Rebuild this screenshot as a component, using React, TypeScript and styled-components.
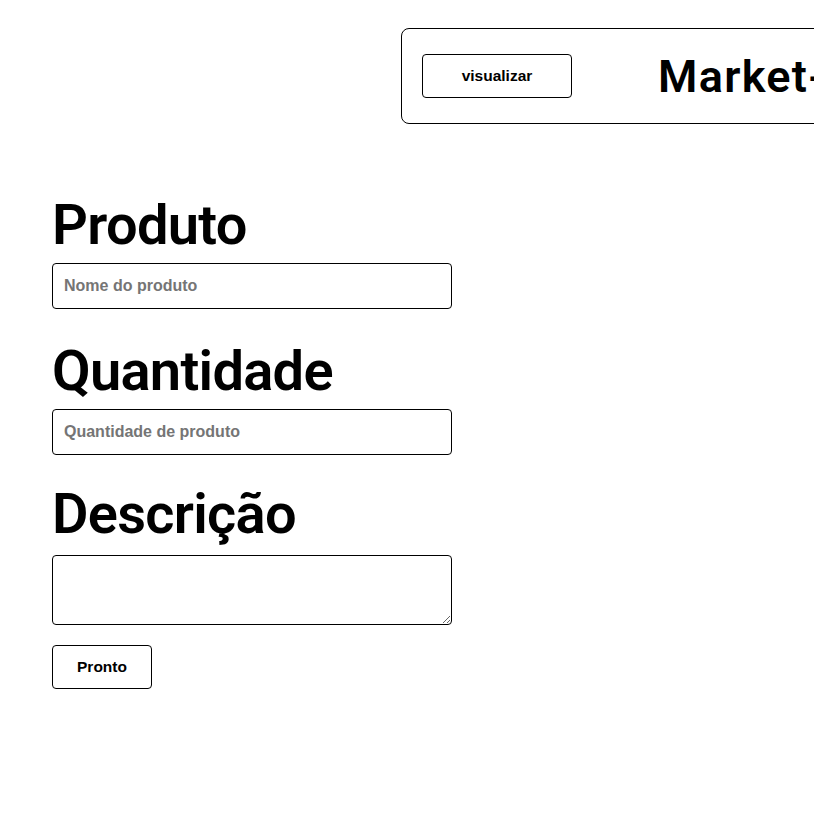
import React from "react";
import styled, { createGlobalStyle } from "styled-components";

const GlobalStyle = createGlobalStyle`
  html { overflow-x: hidden; background: #ffffff; }
  body {
    margin: 8px 0 8px 8px;
    font-family: "Liberation Sans", Arial, sans-serif;
    color: #000;
  }
`;

const Page = styled.div`
  padding-top: 20px;
`;

const TopBar = styled.header`
  margin-left: 393px;
  width: 700px;
  height: 96px;
  box-sizing: border-box;
  border: 1px solid #000;
  border-radius: 8px;
  display: flex;
  align-items: center;
  padding-left: 20px;
  gap: 86px;
`;

const Button = styled.button<{ $w: number }>`
  width: ${(p) => p.$w}px;
  height: 44px;
  box-sizing: border-box;
  background: #fff;
  border: 1px solid #000;
  border-radius: 4px;
  font-family: "Liberation Sans", Arial, sans-serif;
  font-weight: 700;
  font-size: 15.5px;
  color: #000;
  cursor: pointer;
  flex-shrink: 0;
`;

const BrandTitle = styled.h1`
  margin: 0;
  font-family: Roboto, "Liberation Sans", sans-serif;
  font-weight: 600;
  font-size: 45px;
  letter-spacing: 1.3px;
  white-space: nowrap;
`;

const Form = styled.form`
  margin-top: 68px;
  padding-left: 44px;
  display: flex;
  flex-direction: column;
  align-items: flex-start;
`;

const Label = styled.h2<{ $mt: number }>`
  margin: ${(p) => p.$mt}px 0 5px 0;
  font-family: Roboto, "Liberation Sans", sans-serif;
  font-weight: 600;
  font-size: 56px;
  letter-spacing: -0.7px;
  line-height: normal;
`;

const Field = styled.input`
  width: 400px;
  height: 46px;
  box-sizing: border-box;
  border: 1px solid #000;
  border-radius: 4px;
  padding: 0 11px;
  font-family: "Liberation Sans", Arial, sans-serif;
  font-weight: 700;
  font-size: 16px;
  &::placeholder { color: #757575; }
`;

const Area = styled.textarea`
  width: 400px;
  height: 70px;
  box-sizing: border-box;
  border: 1px solid #000;
  border-radius: 4px;
  margin-top: 3px;
  font-family: "Liberation Sans", Arial, sans-serif;
  display: block;
`;

const Submit = styled(Button)`
  margin-top: 20px;
`;

export default function App() {
  return (
    <>
      <GlobalStyle />
      <Page>
        <TopBar>
          <Button type="button" $w={150}>visualizar</Button>
          <BrandTitle>Market-Place</BrandTitle>
        </TopBar>
        <Form onSubmit={(e) => e.preventDefault()}>
          <Label $mt={0}>Produto</Label>
          <Field placeholder="Nome do produto" />
          <Label $mt={29}>Quantidade</Label>
          <Field placeholder="Quantidade de produto" />
          <Label $mt={26}>Descrição</Label>
          <Area />
          <Submit type="submit" $w={100}>Pronto</Submit>
        </Form>
      </Page>
    </>
  );
}
